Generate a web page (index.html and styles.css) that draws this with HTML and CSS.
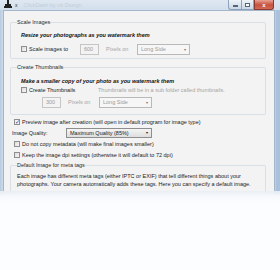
FILE: index.html
```html
<!DOCTYPE html>
<html>
<head>
<meta charset="utf-8">
<link rel="stylesheet" href="styles.css">
</head>
<body>
<div class="window">
  <div class="titlebar">
    <svg class="appicon" width="8" height="9" viewBox="0 0 8 9"><path d="M3 0h2v4h-2z M1 4h6v2h-6z M0 6h8v2h-8z" fill="#222"/></svg>
    <span class="tx">x</span>
    <span class="title">ClickDash by ub Design</span>
    <div class="controls">
      <span class="cbtn min"><i></i></span>
      <span class="cbtn max"><i></i></span>
      <span class="cbtn close">x</span>
    </div>
  </div>
  <div class="body">
    <fieldset class="group g1">
      <legend>Scale Images</legend>
      <div class="inner">
        <div class="lead">Resize your photographs as you watermark them</div>
        <div class="row">
          <span class="cb"></span><span class="lbl w-scale">Scale images to</span>
          <span class="num">600</span>
          <span class="muted pix">Pixels on</span>
          <span class="sel dis">Long Side<b>&#9662;</b></span>
        </div>
      </div>
    </fieldset>
    <fieldset class="group g2">
      <legend>Create Thumbnails</legend>
      <div class="inner">
        <div class="lead">Make a smaller copy of your photo as you watermark them</div>
        <div class="row">
          <span class="cb"></span><span class="lbl w-thumb">Create Thumbnails</span>
          <span class="muted">Thumbnails will be in a sub folder called thumbnails.</span>
        </div>
        <div class="row r2">
          <span class="num">300</span>
          <span class="muted pix">Pixels on</span>
          <span class="sel dis">Long Side<b>&#9662;</b></span>
        </div>
      </div>
    </fieldset>
    <div class="row opt first"><span class="cb on">&#10003;</span><span class="lbl">Preview image after creation (will open in default program for image type)</span></div>
    <div class="row quality"><span class="qlbl">Image Quality:</span><span class="sel qsel">Maximum Quality (85%)<b>&#9662;</b></span></div>
    <div class="row opt"><span class="cb"></span><span class="lbl">Do not copy metadata (will make final images smaller)</span></div>
    <div class="row opt"><span class="cb"></span><span class="lbl">Keep the image dpi settings (otherwise it will default to 72 dpi)</span></div>
    <fieldset class="group g3">
      <legend>Default Image for meta tags</legend>
      <p class="para">Each image has different meta tags (either IPTC or EXIF) that tell different things about your photographs. Your camera automatically adds these tags. Here you can specify a default image.</p>
    </fieldset>
  </div>
</div>
<div class="fade"></div>
</body>
</html>
```
FILE: styles.css
```css
* { box-sizing: border-box; }
html, body { margin: 0; width: 280px; height: 270px; overflow: hidden; }
body {
  background: #fcfdfe;
  font-family: "Liberation Sans", Arial, sans-serif;
  font-size: 5.5px;
  line-height: 8px;
  color: #222;
  position: relative;
}
.window {
  height: 205px;
  display: flex;
  flex-direction: column;
  background: linear-gradient(90deg, #b7cbe0 0, #cddbea 3px, #cddbea 275px, #a9c1da 276px);
  padding: 0 5px 0 3px;
}
.titlebar {
  height: 13px;
  display: flex;
  align-items: center;
  background: linear-gradient(#dfe8f2, #d2dfec);
  margin: 0 -5px 0 -3px;
  padding: 0 6px 0 4px;
}
.appicon { margin-top: -1px; }
.tx { margin-left: 3px; font-size: 5px; color: #333; }
.title { margin-left: 6px; color: #c3cdd8; font-size: 5.5px; }
.controls { margin-left: auto; display: flex; align-self: flex-start; }
.cbtn {
  height: 10px;
  width: 13px;
  border: 1px solid #8ea3bb;
  border-top: 0;
  background: linear-gradient(#eef3f8, #c9d7e6);
  display: flex;
  align-items: center;
  justify-content: center;
}
.cbtn.min { border-radius: 0 0 0 3px; border-right: 0; }
.cbtn.min i { width: 5px; height: 2px; background: #fff; border: 1px solid #55657a; margin-top: 3px; }
.cbtn.max i { width: 5px; height: 4px; border: 1px solid #55657a; background: #fff; }
.cbtn.close {
  width: 20px;
  border-radius: 0 0 3px 0;
  border-color: #8b3a32;
  background: linear-gradient(#e8a293, #c7503c 55%, #d46a55);
  color: #fff;
  font-weight: bold;
  font-size: 6px;
}
.body {
  flex: 1;
  background: #f3f3f3;
  border: 1px solid #a3b6ca;
  border-bottom: 0;
  padding: 0 8px 0 6px;
  display: flex;
  flex-direction: column;
}
.group {
  margin: 0;
  border: 1px solid #d8dfe5;
  border-radius: 2px;
  padding: 0 6px;
  min-width: 0;
}
.group legend { padding: 0; line-height: 8px; color: #2a2a2a; }
.g1 { margin-top: 7px; padding-bottom: 3px; }
.g2 { margin-top: 4px; padding-bottom: 6px; }
.g3 { margin-top: 1px; padding-bottom: 20px; }
.inner { padding-left: 4px; }
.lead { font-weight: bold; font-style: italic; color: #111; }
.g1 .lead { margin-top: 5px; }
.g2 .lead { margin-top: 6px; }
.row { display: flex; align-items: center; height: 12px; }
.g1 .row { margin-top: 4px; }
.g2 .row { margin-top: 0; height: 10px; }
.g2 .row.r2 { height: 12px; margin-top: 1px; padding-left: 21px; }
.cb {
  width: 6px; height: 6px;
  border: 1px solid #8e8f8f;
  background: linear-gradient(135deg, #dcdcdc, #f7f7f7);
  flex: none;
  font-size: 6px;
  line-height: 5px;
  color: #2a3e8a;
  text-align: center;
}
.cb.on { background: #f4f4f4; }
.lbl { margin-left: 2px; white-space: nowrap; }
.w-scale { width: 51px; }
.w-thumb { width: 69px; }
.num {
  width: 19px; height: 11px;
  border: 1px solid #c5c5c5;
  background: #f3f3f3;
  color: #9a9a9a;
  padding-left: 3px;
  line-height: 9px;
}
.muted { color: #a5a5a5; white-space: nowrap; }
.pix { margin-left: 7px; width: 31px; }
.sel {
  position: relative;
  width: 53px; height: 11px;
  border: 1px solid #b9b9b9;
  background: #f6f6f6;
  color: #9a9a9a;
  padding-left: 3px;
  line-height: 9px;
  white-space: nowrap;
}
.sel b {
  position: absolute;
  right: 3px; top: 0;
  font-size: 4px;
  color: #777;
  font-weight: normal;
}
.opt { height: 11px; padding-left: 4px; }
.opt.first { margin-top: 1px; }
.quality { height: 11px; padding-left: 2px; }
.qlbl { width: 54px; }
.qsel {
  width: 86px; height: 10px;
  background: linear-gradient(#f4f4f4, #dedede);
  border-color: #8e8e8e;
  color: #222;
  line-height: 8px;
}
.qsel b { color: #222; }
.para { margin: 3px 0 0; color: #222; line-height: 8px; }
.fade {
  position: absolute;
  left: 0; right: 0; top: 191px; bottom: 0;
  background: linear-gradient(rgba(232, 238, 245, 0.9), #f6f8fb 5px, #fcfdfe 12px);
}
```
